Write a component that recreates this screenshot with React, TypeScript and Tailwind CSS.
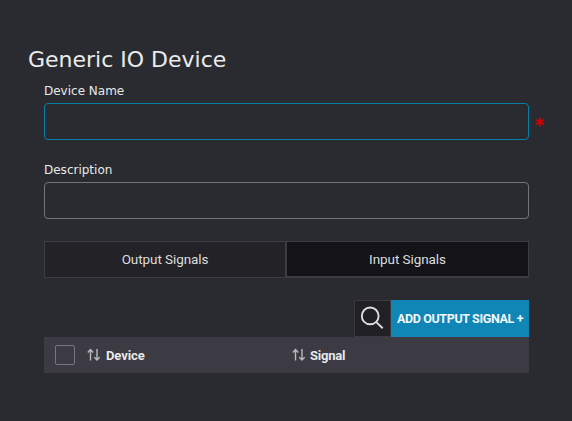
import React from "react";

function SortIcon() {
  return (
    <svg width="14" height="14" viewBox="0 0 14 14" fill="none" stroke="#b9b9bd" strokeWidth="1.4" className="-mt-px shrink-0">
      <path d="M3.5 12.5V1.8M0.8 4.4L3.5 1.6L6.2 4.4" />
      <path d="M10 1V11.8M7.3 9.2L10 12L12.7 9.2" />
    </svg>
  );
}

function Field({ label, active }: { label: string; active?: boolean }) {
  return (
    <label className="block">
      <span className="block h-[19px] whitespace-nowrap font-['DejaVu_Sans',sans-serif] text-[12px] leading-[14px] text-[#e8e8e8]">
        {label}
      </span>
      <span className="flex items-center">
        <input
          aria-label={label}
          className={
            "h-[37px] w-[485px] shrink-0 rounded-[4px] border bg-transparent px-3 text-sm text-white outline-none " +
            (active ? "border-[#087fa5]" : "border-[#737477]")
          }
        />
        {active && (
          <svg width="10" height="10" viewBox="0 0 10 10" stroke="#d40000" strokeWidth="1.8" className="ml-[6px] mt-px shrink-0">
            <path d="M5 0.8V9.2M1 2.7L9 7.3M9 2.7L1 7.3" />
          </svg>
        )}
      </span>
    </label>
  );
}

export default function App() {
  return (
    <main className="h-[421px] w-[572px] overflow-hidden bg-[#2a2b30] pl-[28px] pt-[46px] font-['Roboto',sans-serif]">
      <h1 className="h-[38px] whitespace-nowrap font-['DejaVu_Sans',sans-serif] text-[22px] leading-[28px] text-[#ebebeb]">
        Generic IO Device
      </h1>
      <div className="pl-[16px]">
        <Field label="Device Name" active />
        <div className="h-[23px]" />
        <Field label="Description" />
        <div className="mt-[22px] flex h-[37px] w-[485px] text-[13.5px] tracking-[-0.08px] text-[#dcdcdd]">
          <button className="w-[241px] border border-r-0 border-[#3d3c42] bg-[#232327]">Output Signals</button>
          <button className="w-[244px] border border-b-2 border-l-2 border-[#3d3c42] bg-[#141418] pt-px">Input Signals</button>
        </div>
        <div className="mt-[22px] flex h-[37px] w-[485px] justify-end">
          <button aria-label="Search" className="flex w-[37px] items-center justify-center border border-[#3a3940] bg-[#212125]">
            <svg width="24" height="24" viewBox="0 0 24 24" fill="none" stroke="#dededf" strokeWidth="1.9" className="mb-[2px] mr-px">
              <circle cx="10.2" cy="9.9" r="8.4" />
              <path d="M16.3 16.1L22.7 22.2" />
            </svg>
          </button>
          <button className="w-[138px] whitespace-nowrap bg-[#0f86b5] pt-px text-[12.5px] font-bold tracking-[-0.36px] text-[#f2f6f8]">
            ADD OUTPUT SIGNAL +
          </button>
        </div>
        <div className="flex h-[36px] w-[485px] items-center bg-[#3c3a43] pl-[11px] text-[13px] font-bold text-[#e8e8e9]">
          <span className="-mt-px h-[20px] w-[20px] shrink-0 rounded-[2px] border border-[#77767c]" />
          <div className="ml-[12px] flex w-[205px] items-center gap-[5px]">
            <SortIcon />
            <span className="pt-[2px] tracking-[-0.1px]">Device</span>
          </div>
          <div className="flex items-center gap-[4px]">
            <SortIcon />
            <span className="pt-[2px] tracking-[-0.2px]">Signal</span>
          </div>
        </div>
      </div>
    </main>
  );
}
